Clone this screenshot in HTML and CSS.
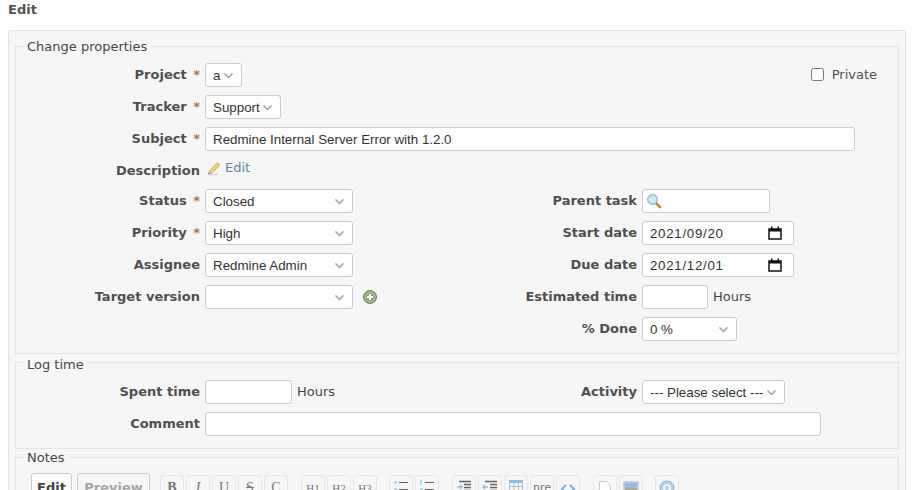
FILE: index.html
```html
<!DOCTYPE html>
<html lang="en">
<head>
    <meta charset="UTF-8">
    <meta name="viewport" content="width=device-width, initial-scale=1.0">
    <title>Edit</title>
    <link rel="stylesheet" href="styles.css">
</head>
<body>
    <h3 class="page-title">Edit</h3>
    <form class="box">
        <fieldset class="group group-props">
            <legend>Change properties</legend>
            <div class="row">
                <label class="lbl">Project <span class="req">*</span></label>
                <select class="field w-project"><option>a</option></select>
                <label class="private"><input type="checkbox"> Private</label>
            </div>
            <div class="row">
                <label class="lbl">Tracker <span class="req">*</span></label>
                <select class="field w-tracker"><option>Support</option></select>
            </div>
            <div class="row">
                <label class="lbl">Subject <span class="req">*</span></label>
                <input class="field w-subject" type="text" value="Redmine Internal Server Error with 1.2.0">
            </div>
            <div class="row row-desc">
                <label class="lbl">Description</label>
                <a class="edit-link" href="#">
                    <svg width="14" height="15" viewBox="0 0 14 15">
                        <path d="M1 13.500h10" stroke="#ddd" stroke-width="1.500"/>
                        <path d="M2.500 10 10.500 1.500 13 4 5 12 1.500 13z" fill="#f2cf7a" stroke="#c9a45a" stroke-width=".8"/>
                        <path d="M2 11.500 1.500 13 3.200 12.500z" fill="#666"/>
                    </svg>
                    Edit</a>
            </div>
            <div class="split">
                <div class="split-left">
                    <div class="row">
                        <label class="lbl">Status <span class="req">*</span></label>
                        <select class="field w-select"><option>Closed</option></select>
                    </div>
                    <div class="row">
                        <label class="lbl">Priority <span class="req">*</span></label>
                        <select class="field w-select"><option>High</option></select>
                    </div>
                    <div class="row">
                        <label class="lbl">Assignee</label>
                        <select class="field w-select"><option>Redmine Admin</option></select>
                    </div>
                    <div class="row">
                        <label class="lbl">Target version</label>
                        <select class="field w-select"><option></option></select>
                        <svg class="add-icon" width="14" height="14" viewBox="0 0 14 14">
                            <circle cx="7" cy="7" r="6.500" fill="#8aa877" stroke="#6a8459"/>
                            <circle cx="7" cy="7" r="5" fill="none" stroke="#b3c8a6"/>
                            <path d="M7 4v6M4 7h6" stroke="#fff" stroke-width="2"/>
                        </svg>
                    </div>
                </div>
                <div class="split-right">
                    <div class="row">
                        <label class="lbl lbl-right">Parent task</label>
                        <div class="field w-parent search-field">
                            <svg width="16" height="16" viewBox="0 0 16 16">
                                <path d="M9.500 9.500 14 14" stroke="#c58a3c" stroke-width="2.600" stroke-linecap="round"/>
                                <circle cx="6.500" cy="6.500" r="4.800" fill="#cfe6f5" stroke="#8fb3cc" stroke-width="1.200"/>
                            </svg>
                        </div>
                    </div>
                    <div class="row">
                        <label class="lbl lbl-right">Start date</label>
                        <div class="field w-date date-field">
                            <span class="date-text">2021/09/20</span>
                            <svg width="14" height="14" viewBox="0 0 14 14"><path d="M1 3h12v10H1z" fill="none" stroke="#111" stroke-width="1.500"/><path d="M1 3h12v2.500H1zM3 .5h1.500V3H3zM9.500 .5H11V3H9.500z" fill="#111"/></svg>
                        </div>
                    </div>
                    <div class="row">
                        <label class="lbl lbl-right">Due date</label>
                        <div class="field w-date date-field">
                            <span class="date-text">2021/12/01</span>
                            <svg width="14" height="14" viewBox="0 0 14 14"><path d="M1 3h12v10H1z" fill="none" stroke="#111" stroke-width="1.500"/><path d="M1 3h12v2.500H1zM3 .5h1.500V3H3zM9.500 .5H11V3H9.500z" fill="#111"/></svg>
                        </div>
                    </div>
                    <div class="row">
                        <label class="lbl lbl-right">Estimated time</label>
                        <input class="field w-hours" type="text">
                        <span class="unit">Hours</span>
                    </div>
                    <div class="row">
                        <label class="lbl lbl-right">% Done</label>
                        <select class="field w-done"><option>0 %</option></select>
                    </div>
                </div>
            </div>
        </fieldset>

        <fieldset class="group group-log">
            <legend>Log time</legend>
            <div class="split">
                <div class="split-left">
                    <div class="row">
                        <label class="lbl">Spent time</label>
                        <input class="field w-spent" type="text">
                        <span class="unit">Hours</span>
                    </div>
                </div>
                <div class="split-right">
                    <div class="row">
                        <label class="lbl lbl-right">Activity</label>
                        <select class="field w-activity"><option>--- Please select ---</option></select>
                    </div>
                </div>
            </div>
            <div class="row">
                <label class="lbl">Comment</label>
                <input class="field w-comment" type="text">
            </div>
        </fieldset>

        <fieldset class="group group-notes">
            <legend>Notes</legend>
            <div class="toolbar-line">
                <a class="tab tab-on" href="#">Edit</a>
                <a class="tab tab-off" href="#">Preview</a>
                <div class="toolbar">
                    <button class="tb" type="button"><b>B</b></button>
                    <button class="tb" type="button"><i>I</i></button>
                    <button class="tb" type="button"><u>U</u></button>
                    <button class="tb" type="button"><s>S</s></button>
                    <button class="tb tb-last" type="button">C</button>
                    <button class="tb tb-sm" type="button">H1</button>
                    <button class="tb tb-sm" type="button">H2</button>
                    <button class="tb tb-sm tb-last-sm" type="button">H3</button>
                    <button class="tb" type="button">
                        <svg width="16" height="16" viewBox="0 0 16 16"><path d="M1 1h3v3H1zM1 8h3v3H1z" fill="#b5daf2"/><path d="M6 2.500h9M6 9.500h9" stroke="#666"/></svg>
                    </button>
                    <button class="tb tb-last" type="button">
                        <svg width="16" height="16" viewBox="0 0 16 16"><path d="M1 0h2v5H1zM1 8h3v4H1z" fill="#b5daf2"/><path d="M6 2.500h9M6 9.500h9" stroke="#666"/></svg>
                    </button>
                    <button class="tb" type="button">
                        <svg width="16" height="16" viewBox="0 0 16 16"><path d="M1 7h5M4 5l2 2-2 2" fill="none" stroke="#8cc4e8" stroke-width="1.400"/><path d="M3 1.500h12M8 4.500h7M8 7.500h7M8 10.500h7" stroke="#666" stroke-width="1.400"/></svg>
                    </button>
                    <button class="tb" type="button">
                        <svg width="16" height="16" viewBox="0 0 16 16"><path d="M6 7H1M3 5 1 7l2 2" fill="none" stroke="#8cc4e8" stroke-width="1.400"/><path d="M3 1.500h12M8 4.500h7M8 7.500h7M8 10.500h7" stroke="#666" stroke-width="1.400"/></svg>
                    </button>
                    <button class="tb" type="button">
                        <svg width="16" height="16" viewBox="0 0 16 16"><path d="M1 0h14v3H1z" fill="#8cc0ee"/><path d="M1.500 3v12M6 3v12M10.500 3v12M14.500 3v12M1 6.500h14M1 10.500h14" stroke="#bbb"/></svg>
                    </button>
                    <button class="tb tb-pre" type="button">pre</button>
                    <button class="tb tb-last" type="button">
                        <svg width="16" height="16" viewBox="0 0 16 16"><path d="M6 5 2 9l4 4M10 5l4 4-4 4" fill="none" stroke="#7fb3e3" stroke-width="2.200"/></svg>
                    </button>
                    <button class="tb" type="button">
                        <svg width="16" height="16" viewBox="0 0 16 16"><path d="M2.500 1.500h7l4 4v10h-11z" fill="#fff" stroke="#ccc"/></svg>
                    </button>
                    <button class="tb tb-last-sm" type="button">
                        <svg width="16" height="16" viewBox="0 0 16 16"><path d="M1 2h14v13H1z" fill="#d9e6ee" stroke="#aaa"/><path d="M2 3h12v5H2z" fill="#8fc0ea"/><path d="M2 8h12v6H2z" fill="#b8ab78"/></svg>
                    </button>
                    <button class="tb" type="button">
                        <svg width="16" height="16" viewBox="0 0 16 16"><circle cx="8" cy="8" r="7" fill="#b5d4ec" stroke="#8fb3d2"/><circle cx="8" cy="8" r="3" fill="none" stroke="#fff" stroke-width="1.500"/></svg>
                    </button>
                </div>
            </div>
        </fieldset>
    </form>
</body>
</html>
```

FILE: styles.css
```css
html {
    overflow: hidden;
}

body {
    margin: 0;
    padding: 0 8px;
    font-family: "DejaVu Sans", Verdana, sans-serif;
    font-size: 13px;
    color: #484848;
    background-color: #fff;
}

.page-title {
    margin: 0;
    padding-top: 2px;
    height: 30px;
    box-sizing: border-box;
    font-size: 13px;
    line-height: 15px;
    color: #555;
}

.box {
    box-sizing: border-box;
    width: 898px;
    padding: 8px 6px 6px;
    background-color: #f6f6f6;
    border: 1px solid #e4e4e4;
    border-radius: 3px;
}

.group {
    margin: 0 0 1px;
    padding: 0;
    border: 1px solid #e4e4e4;
    min-width: 0;
}

.group legend {
    margin-left: 7px;
    padding: 0 4px;
    font-size: 13px;
    line-height: 15px;
    color: #484848;
}

.group-props {
    height: 308px;
    padding-top: 5px;
}

.group-log {
    height: 90px;
    margin-top: -2px;
    padding-top: 4px;
}

.group-log legend {
    padding-top: 4px;
}

.group-notes {
    height: 60px;
    padding-top: 8px;
    margin-bottom: 0;
}

.row {
    display: flex;
    align-items: center;
    height: 32px;
}

.row-desc {
    height: 30px;
    align-items: flex-start;
}

.lbl {
    width: 184px;
    margin-right: 5px;
    margin-bottom: 2px;
    font-weight: bold;
    text-align: right;
    color: #505050;
}

.row-desc .lbl {
    margin-top: 8px;
    margin-bottom: 0;
}

.lbl-right {
    width: 130px;
}

.req {
    margin-left: 2px;
    color: #b5762a;
}

.field {
    box-sizing: border-box;
    height: 24px;
    margin: 0;
    padding: 0 7px;
    background-color: #fff;
    border: 1px solid #ccc;
    border-radius: 3px;
    font-family: "Liberation Sans", Arial, sans-serif;
    font-size: 13.333px;
    color: #333;
}

select.field {
    appearance: none;
    padding-right: 0;
    background-image: url("data:image/svg+xml,%3Csvg xmlns='http://www.w3.org/2000/svg' width='9' height='5'%3E%3Cpath d='M.5.5l4 4 4-4' fill='none' stroke='%23999' stroke-width='1.300'/%3E%3C/svg%3E");
    background-repeat: no-repeat;
    background-position: right 8px center;
}

.w-project { width: 37px; }
.w-tracker { width: 76px; }
.w-subject { width: 650px; }
.w-select { width: 148px; }
.w-parent { width: 128px; }
.w-date { width: 152px; }
.w-hours { width: 66px; }
.w-done { width: 95px; }
.w-spent { width: 87px; }
.w-activity { width: 143px; }
.w-comment { width: 616px; }

.private {
    display: flex;
    align-items: center;
    margin-left: auto;
    margin-right: 21px;
    margin-bottom: 2px;
    gap: 8px;
    color: #505050;
}

.private input {
    width: 13px;
    height: 13px;
    margin: 0;
}

.edit-link {
    display: flex;
    align-items: center;
    gap: 4px;
    margin-top: 5px;
    margin-left: 2px;
    line-height: 16px;
    color: #5e84a8;
    text-decoration: none;
}

.split {
    display: flex;
}

.split-left {
    width: 491px;
}

.split-right {
    flex: 1;
}

.add-icon {
    margin-left: 10px;
}

.unit {
    margin-left: 5px;
    margin-bottom: 2px;
}

.search-field {
    display: flex;
    align-items: center;
    padding: 0 2px 0 3px;
}

.date-field {
    display: flex;
    align-items: center;
    justify-content: space-between;
    padding: 0 11px 0 7px;
}

.date-text {
    letter-spacing: .7px;
}

.toolbar-line {
    display: flex;
    align-items: flex-start;
    padding-left: 15px;
}

.tab {
    box-sizing: border-box;
    height: 30px;
    margin-right: 5px;
    padding: 6px 0 0;
    border: 1px solid #ccc;
    border-radius: 3px 3px 0 0;
    font-weight: bold;
    line-height: 15px;
    text-align: center;
    text-decoration: none;
}

.tab-on {
    width: 41px;
    background-color: #fff;
    color: #444;
}

.tab-off {
    width: 73px;
    color: #a5a5a5;
    background-color: #f6f6f6;
}

.toolbar {
    display: flex;
    margin-left: 5px;
    margin-top: 2px;
}

.tb {
    box-sizing: border-box;
    display: flex;
    align-items: flex-start;
    justify-content: center;
    width: 24px;
    height: 24px;
    margin-right: 2px;
    padding: 4px 0 0;
    background-color: #f6f6f6;
    border: 1px solid #e8e8e8;
    border-radius: 3px;
    font-family: "Liberation Serif", serif;
    font-size: 14px;
    line-height: 16px;
    color: #777;
}

.tb-sm {
    font-size: 11px;
}

.tb-pre {
    font-family: "DejaVu Sans", sans-serif;
    font-size: 11px;
}

.tb-last {
    margin-right: 13px;
}

.tb-last-sm {
    margin-right: 12px;
}
```
